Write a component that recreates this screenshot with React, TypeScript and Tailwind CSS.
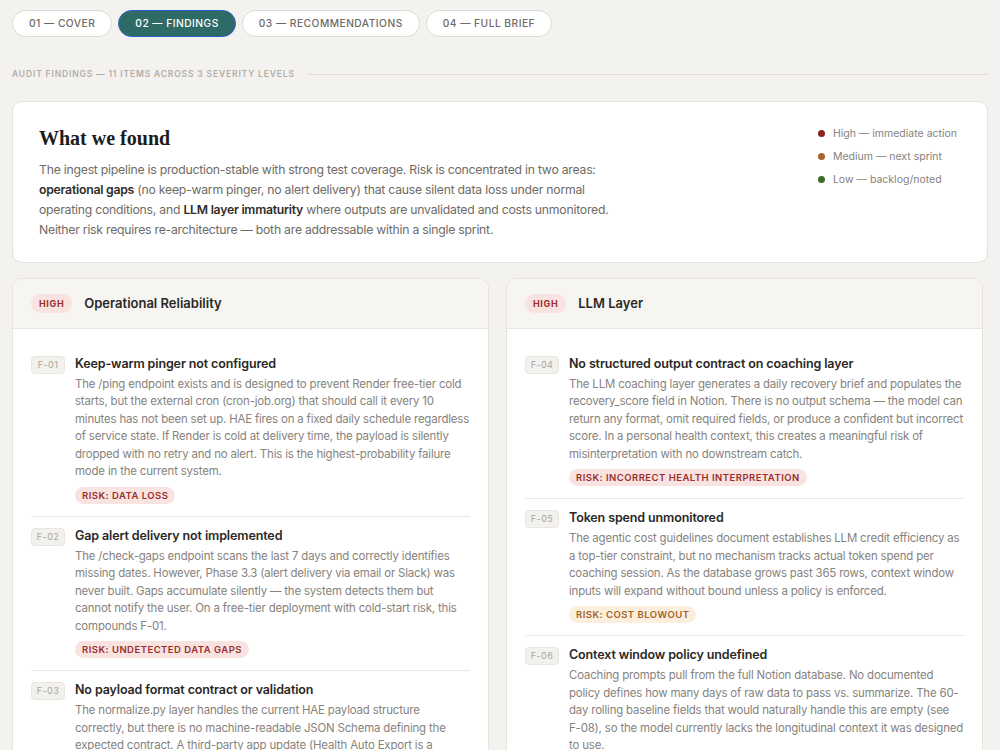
import React from "react";

type Risk = { label: string; tone: "red" | "amber" };

interface Finding {
  id: string;
  title: string;
  body: React.ReactNode;
  risk?: Risk;
}

const reliability: Finding[] = [
  {
    id: "F-01",
    title: "Keep-warm pinger not configured",
    body:
      "The /ping endpoint exists and is designed to prevent Render free-tier cold starts, but the external cron (cron-job.org) that should call it every 10 minutes has not been set up. HAE fires on a fixed daily schedule regardless of service state. If Render is cold at delivery time, the payload is silently dropped with no retry and no alert. This is the highest-probability failure mode in the current system.",
    risk: { label: "Risk: Data loss", tone: "red" },
  },
  {
    id: "F-02",
    title: "Gap alert delivery not implemented",
    body:
      "The /check-gaps endpoint scans the last 7 days and correctly identifies missing dates. However, Phase 3.3 (alert delivery via email or Slack) was never built. Gaps accumulate silently — the system detects them but cannot notify the user. On a free-tier deployment with cold-start risk, this compounds F-01.",
    risk: { label: "Risk: Undetected data gaps", tone: "red" },
  },
  {
    id: "F-03",
    title: "No payload format contract or validation",
    body:
      "The normalize.py layer handles the current HAE payload structure correctly, but there is no machine-readable JSON Schema defining the expected contract. A third-party app update (Health Auto Export is a commercial app) could change field names without warning.",
  },
];

const llm: Finding[] = [
  {
    id: "F-04",
    title: "No structured output contract on coaching layer",
    body:
      "The LLM coaching layer generates a daily recovery brief and populates the recovery_score field in Notion. There is no output schema — the model can return any format, omit required fields, or produce a confident but incorrect score. In a personal health context, this creates a meaningful risk of misinterpretation with no downstream catch.",
    risk: { label: "Risk: Incorrect health interpretation", tone: "red" },
  },
  {
    id: "F-05",
    title: "Token spend unmonitored",
    body:
      "The agentic cost guidelines document establishes LLM credit efficiency as a top-tier constraint, but no mechanism tracks actual token spend per coaching session. As the database grows past 365 rows, context window inputs will expand without bound unless a policy is enforced.",
    risk: { label: "Risk: Cost blowout", tone: "amber" },
  },
  {
    id: "F-06",
    title: "Context window policy undefined",
    body: (
      <>
        Coaching prompts pull from the full Notion database. No documented policy defines how many days of raw data to
        pass vs. summarize. The 60-day rolling baseline fields that would naturally handle this are empty (see{" "}
        <span className="whitespace-nowrap">F-08),</span> so the model currently lacks the longitudinal context it was
        designed to use.
      </>
    ),
  },
];

const tabs = ["01 — Cover", "02 — Findings", "03 — Recommendations", "04 — Full Brief"];

function RiskTag({ risk }: { risk: Risk }) {
  const tone =
    risk.tone === "red" ? "bg-[#f8e3e1] text-[#9a2e2c]" : "bg-[#fbeedd] text-[#a2632a]";
  return (
    <span
      className={`mt-[1px] inline-block rounded-full px-[7px] py-[2px] text-[9.5px] font-semibold uppercase leading-[13px] tracking-[0.05em] ${tone}`}
    >
      {risk.label}
    </span>
  );
}

function FindingRow({ f, last }: { f: Finding; last: boolean }) {
  return (
    <div className={`flex gap-[10px] pb-[11px] pt-[10px] ${last ? "" : "border-b border-[#ebe7e1]"}`}>
      <span className="mt-[1px] h-[18px] w-[34px] shrink-0 rounded-[4px] border border-[#e9e6e0] bg-[#f3f1ed] text-center text-[9px] leading-[16px] tracking-[0.05em] text-[#a9a5a0]">
        {f.id}
      </span>
      <div className="min-w-0 flex-1">
        <h3 className="text-[12.5px] font-semibold leading-[18px] tracking-[-0.01em] text-[#2a2826]">
          {f.title}
        </h3>
        <p className="mt-[3px] text-[11.45px] leading-[17.5px] tracking-[-0.015em] text-[#86827d]">{f.body}</p>
        {f.risk && <RiskTag risk={f.risk} />}
      </div>
    </div>
  );
}

function Group({ title, items }: { title: string; items: Finding[] }) {
  return (
    <section className="overflow-hidden rounded-[10px] border border-[#e6e2dc] bg-white">
      <header className="flex h-[50px] items-center gap-[12px] border-b border-[#e9e5df] bg-[#f7f5f2] px-[18px]">
        <span className="rounded-full bg-[#f8e3e1] px-[8px] py-[3px] text-[9px] font-bold uppercase tracking-[0.07em] text-[#9a2e2c]">
          High
        </span>
        <h2 className="text-[13px] font-semibold text-[#2a2826]">{title}</h2>
      </header>
      <div className="px-[18px] pt-[16px]">
        {items.map((f, i) => (
          <FindingRow key={f.id} f={f} last={i === items.length - 1} />
        ))}
      </div>
    </section>
  );
}

export default function App() {
  return (
    <div
      className="min-h-[750px] bg-[#f4f2ee] px-[12px] pt-[10px] text-[#2a2826]"
      style={{ fontFamily: "Inter, 'Noto Sans', sans-serif" }}
    >
      <nav className="flex gap-[6px]">
        {tabs.map((t, i) => (
          <button
            key={t}
            className={`h-[27px] rounded-full border px-[16px] text-[10.25px] font-medium uppercase tracking-[0.045em] ${
              i === 1
                ? "border-[#2f5fc4] bg-[#2f6b66] text-white"
                : "border-[#dedad4] bg-white text-[#6f6b66]"
            }`}
          >
            {t}
          </button>
        ))}
      </nav>

      <div className="mt-[31px] flex items-center gap-[12px]">
        <span className="text-[8.5px] font-semibold uppercase tracking-[0.1em] text-[#b2aea8]">
          Audit findings — 11 items across 3 severity levels
        </span>
        <div className="h-px flex-1 bg-[#e2ded8]" />
      </div>

      <div className="mt-[20px] flex justify-between rounded-[10px] border border-[#e6e2dc] bg-white pb-[22px] pl-[26px] pr-[24px] pt-[23px]">
        <div className="w-[592px]">
          <h1
            className="text-[20px] font-bold leading-[26px] text-[#1e1c1a]"
            style={{ fontFamily: "'Liberation Serif', serif" }}
          >
            What we found
          </h1>
          <p className="mt-[9px] text-[12.25px] leading-[20px] tracking-[-0.02em] text-[#6f6b66]">
            The ingest pipeline is production-stable with strong test coverage. Risk is concentrated in two areas:{" "}
            <strong className="font-semibold text-[#2f2c29]">operational gaps</strong> (no keep-warm pinger, no alert
            delivery) that cause silent data loss under normal operating conditions, and{" "}
            <strong className="font-semibold text-[#2f2c29]">LLM layer immaturity</strong> where outputs are
            unvalidated and costs unmonitored. Neither risk requires re-architecture — both are addressable within a
            single sprint.
          </p>
        </div>
        <ul className="mr-[6px] mt-[1px] flex flex-col gap-[7px] text-[10.5px] leading-[16px] text-[#86827d]">
          <li className="flex items-center gap-[8px]">
            <span className="h-[7px] w-[7px] rounded-full bg-[#8c2323]" />
            High — immediate action
          </li>
          <li className="flex items-center gap-[8px]">
            <span className="h-[7px] w-[7px] rounded-full bg-[#a8652a]" />
            Medium — next sprint
          </li>
          <li className="flex items-center gap-[8px]">
            <span className="h-[7px] w-[7px] rounded-full bg-[#3d6b2a]" />
            Low — backlog/noted
          </li>
        </ul>
      </div>

      <div className="mt-[15px] grid grid-cols-2 gap-[17px] pr-[5px]">
        <Group title="Operational Reliability" items={reliability} />
        <Group title="LLM Layer" items={llm} />
      </div>
    </div>
  );
}
